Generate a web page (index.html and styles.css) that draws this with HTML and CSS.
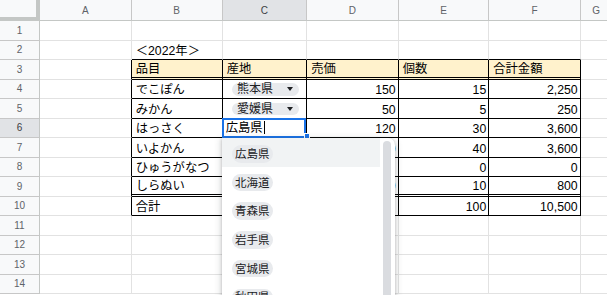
FILE: index.html
```html
<!DOCTYPE html>
<html lang="ja">
<head>
<meta charset="utf-8">
<title>Sheet</title>
<link rel="stylesheet" href="styles.css">
</head>
<body>
<div class="sheet">
  <div class="row head">
    <div class="corner"></div>
    <div class="ch">A</div><div class="ch">B</div><div class="ch sel">C</div><div class="ch">D</div><div class="ch">E</div><div class="ch">F</div><div class="ch">G</div>
  </div>
  <div class="row">
    <div class="rh">1</div><div class="c"></div><div class="c"></div><div class="c"></div><div class="c"></div><div class="c"></div><div class="c"></div><div class="c"></div>
  </div>
  <div class="row">
    <div class="rh">2</div><div class="c"></div><div class="c tt">＜2022年＞</div><div class="c tt"></div><div class="c tt"></div><div class="c tt"></div><div class="c tt"></div><div class="c"></div>
  </div>
  <div class="row">
    <div class="rh">3</div><div class="c tl"></div><div class="c t th">品目</div><div class="c t th">産地</div><div class="c t th">売価</div><div class="c t th">個数</div><div class="c t th">合計金額</div><div class="c"></div>
  </div>
  <div class="row">
    <div class="rh">4</div><div class="c tl"></div><div class="c t">でこぽん</div><div class="c t"><span class="chip">熊本県<i class="tri"></i></span></div><div class="c t num">150</div><div class="c t num">15</div><div class="c t num">2,250</div><div class="c"></div>
  </div>
  <div class="row">
    <div class="rh">5</div><div class="c tl"></div><div class="c t">みかん</div><div class="c t"><span class="chip">愛媛県<i class="tri"></i></span></div><div class="c t num">50</div><div class="c t num">5</div><div class="c t num">250</div><div class="c"></div>
  </div>
  <div class="row">
    <div class="rh sel">6</div><div class="c tl"></div><div class="c t">はっさく</div>
    <div class="c t active">
      <div class="editor">広島県<span class="caret"></span></div>
      <span class="handle"></span>
      <div class="dropdown">
        <ul class="list">
          <li class="item hover"><span class="pill">広島県</span></li>
          <li class="item"><span class="pill">北海道</span></li>
          <li class="item"><span class="pill">青森県</span></li>
          <li class="item"><span class="pill">岩手県</span></li>
          <li class="item"><span class="pill">宮城県</span></li>
          <li class="item"><span class="pill">秋田県</span></li>
        </ul>
        <div class="scroll"><div class="thumb"></div></div>
      </div>
    </div>
    <div class="c t num">120</div><div class="c t num">30</div><div class="c t num">3,600</div><div class="c"></div>
  </div>
  <div class="row">
    <div class="rh">7</div><div class="c tl"></div><div class="c t">いよかん</div><div class="c t"></div><div class="c t num">90</div><div class="c t num">40</div><div class="c t num">3,600</div><div class="c"></div>
  </div>
  <div class="row">
    <div class="rh">8</div><div class="c tl"></div><div class="c t">ひゅうがなつ</div><div class="c t"></div><div class="c t num"></div><div class="c t num">0</div><div class="c t num">0</div><div class="c"></div>
  </div>
  <div class="row">
    <div class="rh">9</div><div class="c tl"></div><div class="c t dbl">しらぬい</div><div class="c t dbl"></div><div class="c t dbl num">80</div><div class="c t dbl num">10</div><div class="c t dbl num">800</div><div class="c"></div>
  </div>
  <div class="row">
    <div class="rh">10</div><div class="c tl"></div><div class="c t">合計</div><div class="c t"></div><div class="c t num"></div><div class="c t num">100</div><div class="c t num">10,500</div><div class="c"></div>
  </div>
  <div class="row">
    <div class="rh">11</div><div class="c"></div><div class="c"></div><div class="c"></div><div class="c"></div><div class="c"></div><div class="c"></div><div class="c"></div>
  </div>
  <div class="row">
    <div class="rh">12</div><div class="c"></div><div class="c"></div><div class="c"></div><div class="c"></div><div class="c"></div><div class="c"></div><div class="c"></div>
  </div>
  <div class="row">
    <div class="rh">13</div><div class="c"></div><div class="c"></div><div class="c"></div><div class="c"></div><div class="c"></div><div class="c"></div><div class="c"></div>
  </div>
  <div class="row">
    <div class="rh">14</div><div class="c"></div><div class="c"></div><div class="c"></div><div class="c"></div><div class="c"></div><div class="c"></div><div class="c"></div>
  </div>
</div>
</body>
</html>
```
FILE: styles.css
```css
html, body {
  margin: 0;
  padding: 0;
  background: #fff;
  overflow: hidden;
}
body {
  width: 607px;
  height: 295px;
  font-family: "Liberation Sans", "Noto Sans CJK JP", sans-serif;
}
.sheet {
  width: 613px;
}
.row {
  display: grid;
  grid-template-columns: 40px 91.7px 91px 84.6px 91.4px 90.6px 91.4px 32px;
  height: 19.5px;
}
.row.head {
  height: 21px;
}
.row > div {
  box-sizing: border-box;
  min-width: 0;
}
.corner {
  background: #f8f9fa;
  border-right: 4px solid #c4c7c5;
  border-bottom: 4px solid #c4c7c5;
}
.ch {
  background: #f8f9fa;
  border-right: 1px solid #c7c7c7;
  border-bottom: 1px solid #c4c7c5;
  color: #5f6368;
  font-size: 10px;
  display: flex;
  align-items: center;
  justify-content: center;
  padding-top: 1px;
}
.ch.sel {
  background: #e1e3e6;
  color: #3c4043;
}
.rh {
  background: #f8f9fa;
  border-right: 1px solid #c4c7c5;
  border-bottom: 1px solid #c7c7c7;
  color: #5f6368;
  font-size: 10px;
  display: flex;
  align-items: center;
  justify-content: center;
}
.rh.sel {
  background: #e1e3e6;
  color: #3c4043;
}
.c {
  border-right: 1px solid #e2e2e2;
  border-bottom: 1px solid #e2e2e2;
  font-size: 12.3px;
  line-height: 16px;
  color: #000;
  display: flex;
  align-items: flex-end;
  padding: 0 3px 0 4px;
  white-space: nowrap;
}
.c.tt {
  border-bottom-color: #000;
}
.c.tl {
  border-right-color: #000;
}
.c.t {
  border-right-color: #000;
  border-bottom-color: #000;
}
.c.th {
  background: #fff2cc;
  border-bottom: 3px double #000;
}
.c.dbl {
  border-bottom: 3px double #000;
}
.c.num {
  justify-content: flex-end;
  padding-right: 2px;
}
.chip {
  display: inline-flex;
  align-items: center;
  box-sizing: border-box;
  width: 67px;
  height: 12.5px;
  margin: 0 0 2.5px 5.3px;
  padding-left: 5px;
  border-radius: 7px;
  background: #e8eaed;
  font-size: 12px;
  line-height: 12px;
  color: #202124;
}
.tri {
  margin-left: auto;
  margin-right: 5.5px;
  width: 0;
  height: 0;
  border-left: 3.5px solid transparent;
  border-right: 3.5px solid transparent;
  border-top: 4px solid #202124;
}
.active {
  position: relative;
}
.editor {
  position: absolute;
  top: -1px;
  left: -1px;
  right: 0;
  bottom: -1px;
  border: 2px solid #1a73e8;
  background: #fff;
  display: flex;
  align-items: center;
  padding-left: 2px;
  font-size: 12.3px;
  color: #000;
  z-index: 2;
}
.caret {
  display: inline-block;
  width: 1px;
  height: 13px;
  background: #000;
  margin-left: 1px;
}
.handle {
  position: absolute;
  right: -4px;
  bottom: -2px;
  width: 4px;
  height: 4px;
  background: #1a73e8;
  border: 1px solid #fff;
  z-index: 3;
}
.dropdown {
  position: absolute;
  top: calc(100% + 1px);
  left: -1px;
  width: 173px;
  height: 200px;
  background: #fff;
  border-radius: 0 7px 0 0;
  box-shadow: 0 1px 3px rgba(60, 64, 67, 0.3), 0 2px 6px 2px rgba(60, 64, 67, 0.15);
  display: flex;
  z-index: 4;
  overflow: hidden;
}
.list {
  list-style: none;
  margin: 0;
  padding: 0;
  width: 158px;
}
.item {
  box-sizing: border-box;
  height: 28.7px;
  padding: 3px 0 0 10px;
  display: flex;
  align-items: center;
}
.item.hover {
  background: #f1f3f4;
}
.pill {
  display: inline-flex;
  align-items: center;
  justify-content: center;
  width: 41px;
  height: 17.5px;
  border-radius: 9px;
  background: #e8eaed;
  font-size: 11.5px;
  color: #202124;
}
.scroll {
  flex: 1;
  padding: 3px 4px 0 3px;
}
.thumb {
  width: 8px;
  height: 190px;
  border-radius: 4px;
  background: #dadce0;
}
```
